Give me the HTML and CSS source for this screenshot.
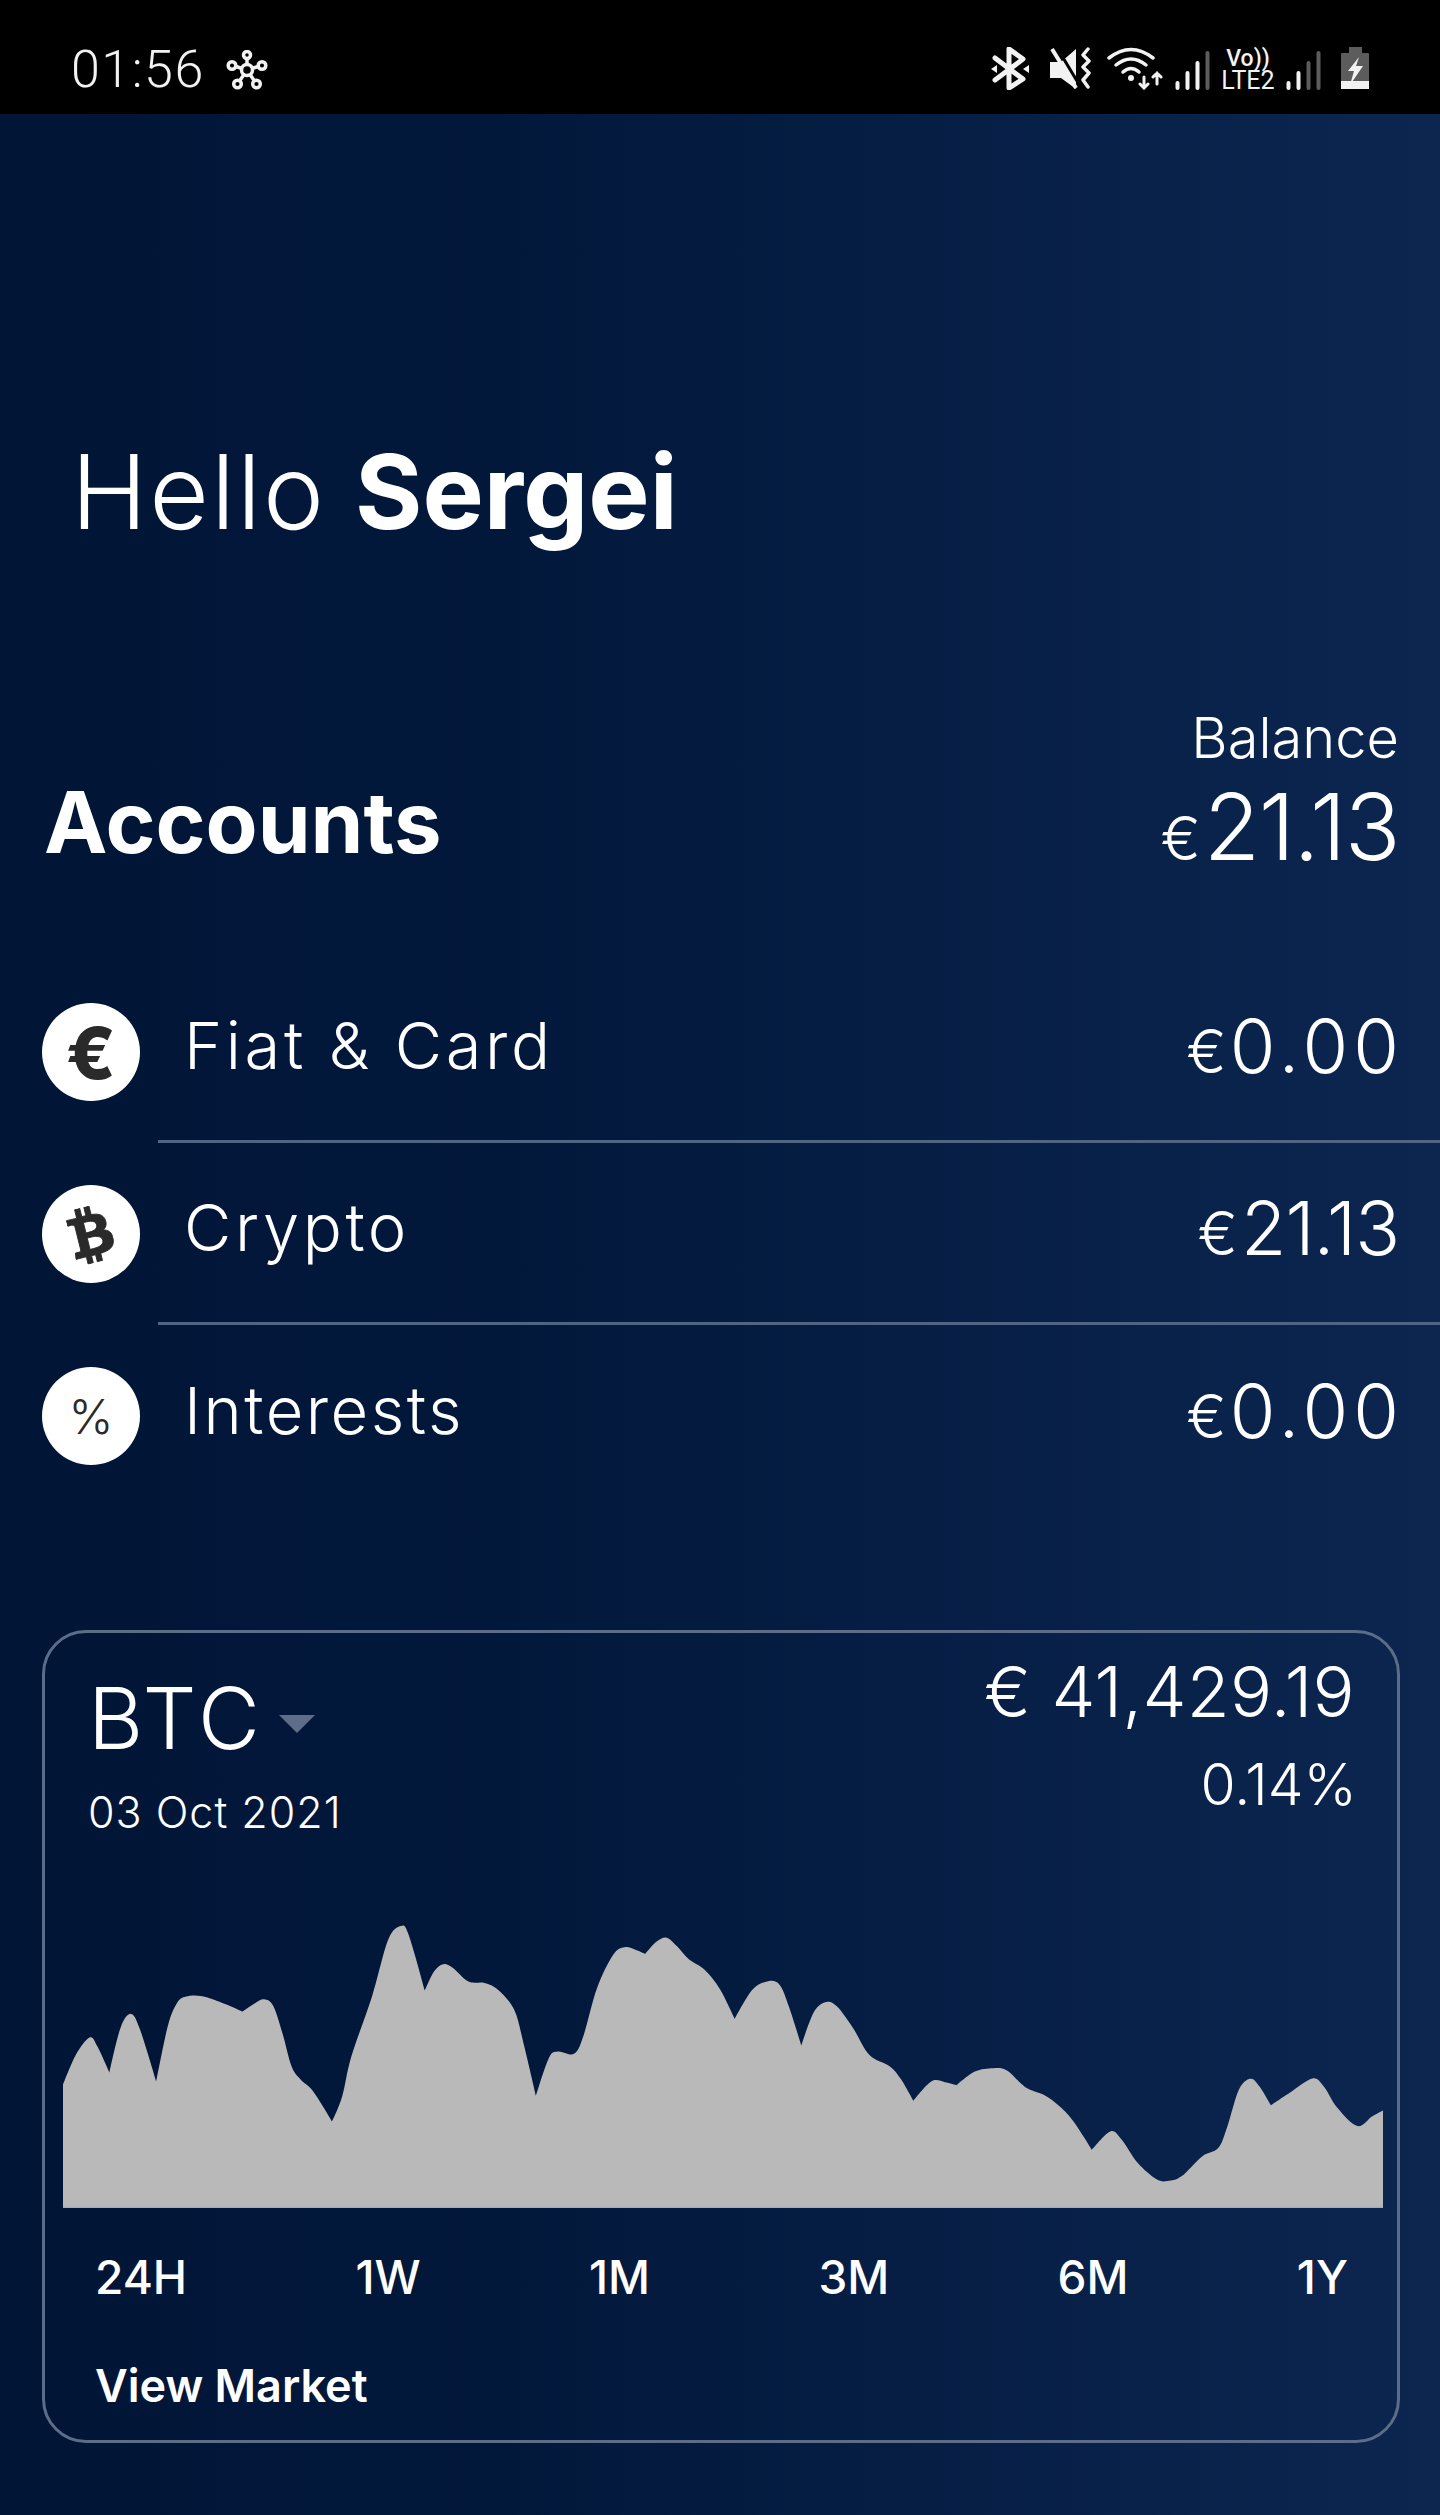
FILE: index.html
```html
<!DOCTYPE html>
<html lang="en">
<head>
  <meta charset="UTF-8" />
  <meta name="viewport" content="width=device-width, initial-scale=1.0"/>
  <title>Accounts</title>
  <link rel="stylesheet" href="styles.css">
</head>
<body>
  <header class="status-bar">
    <div class="status-left">
      <span class="clock">01:56</span>
      <svg class="flower" width="42" height="40" viewBox="0 0 42 40" fill="none" stroke="#f2f2f2" stroke-width="3.500">
        <circle cx="21" cy="20" r="5.500"/>
        <circle cx="21" cy="5" r="3.500"/>
        <circle cx="6" cy="15.500" r="3.800"/>
        <circle cx="36" cy="15.500" r="3.800"/>
        <circle cx="11.500" cy="34" r="3.800"/>
        <circle cx="30.500" cy="34" r="3.800"/>
        <path d="M21 9V14.500M10 16.500L16 18.500M32 16.500L26 18.500M13.500 31L18 24.500M28.500 31L24 24.500"/>
      </svg>
    </div>
    <div class="status-right">
      <svg width="38" height="43" viewBox="0 0 38 43">
        <path d="M4 11L32 32L18 41V2L32 12L4 33" fill="none" stroke="#f2f2f2" stroke-width="5" stroke-linejoin="round" stroke-linecap="round"/>
        <path d="M0 22L6 18V26ZM38 18V26L32 22Z" fill="#f2f2f2"/>
      </svg>
      <svg class="ico-mute" width="42" height="43" viewBox="0 0 42 43">
        <path d="M1 15H12L27 2V42L12 31H1Z" fill="#f2f2f2"/>
        <path d="M7 -1L31 39" stroke="#000" stroke-width="3"/>
        <path d="M3 2L27 41" stroke="#f2f2f2" stroke-width="4"/>
        <path d="M39 2L34 8L40 14L34 20L40 26L34 33L39 40" fill="none" stroke="#f2f2f2" stroke-width="3.500" stroke-linejoin="round" stroke-linecap="round"/>
      </svg>
      <svg class="ico-wifi" width="57" height="43" viewBox="0 0 57 43">
        <g fill="none" stroke="#f2f2f2" stroke-width="3.500" stroke-linecap="round">
          <path d="M2 11Q24 -6 46 11"/>
          <path d="M9 18Q24 6 39 18"/>
          <path d="M16 25Q24 18 32 25"/>
          <path d="M37 30V41M33 37L37 41L41 37M50 37V26M46 30L50 26L54 30" stroke-width="3"/>
        </g>
        <circle cx="24" cy="31" r="3" fill="#f2f2f2"/>
      </svg>
      <svg class="ico-signal" width="36" height="40" viewBox="0 0 36 40">
        <rect x="0.500" y="31" width="4" height="9" rx="2" fill="#f2f2f2"/>
        <rect x="10.500" y="21" width="4" height="19" rx="2" fill="#f2f2f2"/>
        <rect x="20.500" y="11" width="4" height="29" rx="2" fill="#f2f2f2"/>
        <rect x="30.500" y="1" width="4" height="39" rx="2" fill="#5c5c5c"/>
      </svg>
      <div class="volte">
        <span class="vo">Vo))</span>
        <span class="lte">LTE2</span>
      </div>
      <svg class="ico-signal" width="36" height="40" viewBox="0 0 36 40">
        <rect x="0.500" y="31" width="4" height="9" rx="2" fill="#f2f2f2"/>
        <rect x="10.500" y="21" width="4" height="19" rx="2" fill="#f2f2f2"/>
        <rect x="20.500" y="11" width="4" height="29" rx="2" fill="#5c5c5c"/>
        <rect x="30.500" y="1" width="4" height="39" rx="2" fill="#5c5c5c"/>
      </svg>
      <svg class="ico-battery" width="28" height="43" viewBox="0 0 28 43">
        <path d="M8 0H21V6H27Q28 6 28 7V34H0V7Q0 6 1 6H8Z" fill="#5c5c5c"/>
        <path d="M0 34H28V42H0Z" fill="#f2f2f2"/>
        <path d="M18 10L7 24H13L9 38L22 19H15Z" fill="#f2f2f2"/>
      </svg>
    </div>
  </header>

  <main>
    <h1 class="greeting"><span class="hello">Hello</span> <b>Sergei</b></h1>

    <section class="accounts-head">
      <h2>Accounts</h2>
      <div class="balance">
        <div class="balance-label">Balance</div>
        <div class="balance-value"><span class="cur">€</span>21.13</div>
      </div>
    </section>

    <ul class="account-list">
      <li class="account">
        <span class="coin coin-euro">€</span>
        <div class="account-body">
          <span class="account-name">Fiat &amp; Card</span>
          <span class="account-value zero"><span class="cur">€</span>0.00</span>
        </div>
      </li>
      <li class="account">
        <span class="coin">
          <svg width="42" height="57" viewBox="0 0 384 512" class="btc-mark">
            <path fill="#2a2a2a" stroke="#2a2a2a" stroke-width="8" d="M310.204 242.638c27.73-14.18 45.377-39.39 41.28-81.3-5.358-57.351-52.458-76.573-114.85-81.929V0h-48.528v77.203c-12.605 0-25.525.315-38.444.63V0h-48.528v79.409c-17.842.539-38.622.276-97.37 0v51.678c38.314-.678 58.417-3.14 63.023 21.427v217.429c-2.925 19.492-18.524 16.685-53.255 16.071L3.765 443.68c88.481 0 97.37.315 97.37.315V512h48.528v-67.06c13.234.315 26.154.315 38.444.315V512h48.528v-68.005c81.299-4.412 135.647-24.894 142.895-101.467 5.671-61.446-23.32-88.862-69.326-99.89zM150.608 134.553c27.415 0 113.126-8.507 113.126 48.528 0 54.515-85.71 48.212-113.126 48.212v-96.74zm0 251.776V279.821c32.772 0 133.127-9.138 133.127 53.255-.001 60.186-100.355 53.253-133.127 53.253z"/>
          </svg>
        </span>
        <div class="account-body">
          <span class="account-name">Crypto</span>
          <span class="account-value"><span class="cur">€</span>21.13</span>
        </div>
      </li>
      <li class="account">
        <span class="coin coin-pct">%</span>
        <div class="account-body">
          <span class="account-name tight">Interests</span>
          <span class="account-value zero"><span class="cur">€</span>0.00</span>
        </div>
      </li>
    </ul>

    <section class="market-card">
      <div class="market-head">
        <div class="market-title">
          <div class="symbol">BTC<span class="caret"></span></div>
          <div class="market-date">03 Oct 2021</div>
        </div>
        <div class="market-price">
          <div class="price">€ 41,429.19</div>
          <div class="change">0.14%</div>
        </div>
      </div>

      <svg class="chart" width="1320" height="308" viewBox="137 0 2875 925" preserveAspectRatio="none">
        <path id="chart-area" fill="#b9b9b9"/>
        <path d="M137 923H3012" stroke="#9aa8bf" stroke-width="3"/>
      </svg>

      <div class="ranges">
        <span>24H</span>
        <span>1W</span>
        <span>1M</span>
        <span>3M</span>
        <span>6M</span>
        <span>1Y</span>
      </div>
      <div class="view-market">View Market</div>
    </section>
  </main>

  <script src="chart.js"></script>
</body>
</html>
```

FILE: styles.css
```css
* {
  box-sizing: border-box;
}
html, body {
  margin: 0;
  padding: 0;
}
body {
  width: 1440px;
  height: 2515px;
  overflow: hidden;
  font-family: Inter, "Liberation Sans", sans-serif;
  color: #fff;
  background: linear-gradient(90deg, #011536 0%, #02183b 35%, #0c2650 100%);
}

/* status bar */
.status-bar {
  height: 114px;
  background: #000;
  display: flex;
  justify-content: space-between;
  padding: 47px 71px 0 71px;
}
.status-left {
  display: flex;
  align-items: flex-start;
  gap: 21px;
}
.clock {
  font-family: Roboto, sans-serif;
  font-weight: 300;
  font-size: 52px;
  line-height: 46px;
  letter-spacing: 1.500px;
  color: #f2f2f2;
}
.flower {
  margin-top: 3px;
}
.status-right {
  display: flex;
  align-items: flex-start;
}
.ico-mute {
  margin-left: 20px;
}
.ico-wifi {
  margin-left: 16px;
}
.ico-signal {
  margin: 3px 0 0 11px;
}
.volte {
  margin-left: 10px;
  width: 54px;
  display: flex;
  flex-direction: column;
  align-items: center;
  font-family: Roboto, sans-serif;
  font-weight: 500;
  color: #f2f2f2;
}
.vo {
  font-size: 23px;
  line-height: 24px;
}
.lte {
  font-weight: 400;
  font-size: 25px;
  line-height: 20px;
}
.ico-battery {
  margin-left: 19px;
}

/* greeting + totals */
.greeting {
  margin: 318px 0 0;
  padding-left: 71px;
  font-size: 103px;
  line-height: 120px;
  font-weight: 300;
}
.hello {
  letter-spacing: 2px;
}
.greeting b {
  font-weight: 700;
}
.accounts-head {
  margin-top: 156px;
  padding: 0 41px 0 44px;
  display: flex;
  justify-content: space-between;
  align-items: flex-end;
}
.accounts-head h2 {
  margin: 0 0 4px;
  font-size: 85px;
  line-height: 100px;
  font-weight: 700;
}
.balance {
  text-align: right;
}
.balance-label {
  font-size: 56px;
  line-height: 60px;
  font-weight: 300;
}
.balance-value {
  margin-top: 9px;
  height: 100px;
  font-size: 92px;
  line-height: 100px;
  letter-spacing: -1.500px;
  font-weight: 300;
}
.cur {
  font-size: 60px;
  letter-spacing: 0;
  margin-right: 3px;
}

/* account rows */
.account-list {
  list-style: none;
  margin: 84px 0 0;
  padding: 0;
}
.account {
  display: flex;
  align-items: center;
  height: 182px;
  padding-left: 42px;
}
.coin {
  flex: none;
  width: 98px;
  height: 98px;
  border-radius: 50%;
  background: #fff;
  color: #2a2a2a;
  display: flex;
  align-items: center;
  justify-content: center;
}
.coin-euro {
  font-size: 72px;
  font-weight: 800;
}
.coin-pct {
  font-size: 48px;
  font-weight: 300;
}
.btc-mark {
  transform: rotate(-14deg);
}
.account-body {
  flex: 1;
  height: 182px;
  margin-left: 18px;
  padding: 0 41px 10px 26px;
  display: flex;
  align-items: center;
  justify-content: space-between;
  border-bottom: 3px solid #4f6583;
}
.account:last-child .account-body {
  border-bottom: none;
}
.account-name {
  font-size: 65px;
  font-weight: 300;
  line-height: 80px;
  letter-spacing: 3.600px;
}
.account-name.tight {
  letter-spacing: 2.500px;
}
.account-value {
  height: 80px;
  font-size: 74px;
  font-weight: 300;
  line-height: 80px;
  letter-spacing: -1px;
}
.account-value.zero {
  letter-spacing: 5px;
  margin-right: -5px;
}

/* BTC card */
.market-card {
  margin: 123px 40px 0 42px;
  height: 813px;
  border: 3px solid #5b6d88;
  border-radius: 44px;
}
.market-head {
  display: flex;
  justify-content: space-between;
  padding: 19px 42px 0 43px;
}
.market-title {
  margin-top: 17px;
}
.symbol {
  display: flex;
  align-items: center;
  font-size: 85px;
  line-height: 100px;
  font-weight: 300;
  letter-spacing: 4px;
}
.caret {
  margin: 10px 0 0 15px;
  width: 0;
  height: 0;
  border-left: 18px solid transparent;
  border-right: 18px solid transparent;
  border-top: 18px solid #5f6e88;
}
.market-date {
  margin-top: 18px;
  font-size: 43px;
  line-height: 50px;
  font-weight: 300;
  letter-spacing: 1px;
}
.market-price {
  text-align: right;
}
.price {
  font-size: 70px;
  line-height: 80px;
  font-weight: 300;
  letter-spacing: 0.300px;
}
.change {
  margin: 28px -2px 0 0;
  font-size: 57px;
  line-height: 50px;
  font-weight: 300;
}
.chart {
  display: block;
  margin: 63px 0 0 18px;
}
.ranges {
  margin-top: 44px;
  padding: 0 49px 0 50px;
  display: flex;
  justify-content: space-between;
  font-size: 46px;
  line-height: 50px;
  font-weight: 500;
}
.view-market {
  margin-top: 59px;
  padding-left: 50px;
  font-size: 45px;
  line-height: 50px;
  font-weight: 600;
}
```

FILE: chart.js
```js
// outline of the price area, x/y in viewBox units. third value marks a sharp dip
const points = [
  [137,555,1],[165,465],[195,413],[212,440],[238,518,1],[262,385],[285,342],[305,390],[340,545,1],
  [365,380],[385,310],[405,290],[440,289],[490,312],[528,335,1],[555,310],[575,298],[595,318],
  [615,400],[635,500],[655,540],[682,575],[723,665,1],[745,590],[765,470],[810,290],[845,120],
  [873,78],[890,105],[925,272,1],[945,215],[965,193],[985,203],[1020,245],[1055,249],[1085,270],
  [1120,330],[1140,430],[1167,588,1],[1195,475],[1215,455],[1250,462],[1270,410],[1300,265],
  [1335,165],[1360,142],[1385,150],[1405,162,1],[1430,125],[1452,113],[1475,140],[1500,178],
  [1535,210],[1568,268],[1600,357,1],[1638,270],[1673,244],[1698,255],[1718,320],[1745,437,1],
  [1773,335],[1800,306],[1823,320],[1858,385],[1893,465],[1938,500],[1963,540],[1989,603,1],
  [2028,545],[2058,547],[2083,556,1],[2123,515],[2163,505],[2193,512],[2233,562],[2273,585],
  [2308,620],[2338,665],[2378,750,1],[2418,695],[2443,720],[2478,790],[2518,838],[2543,844],
  [2573,830],[2618,770],[2653,745],[2673,680],[2698,570],[2723,537],[2743,560],[2768,617,1],
  [2808,580],[2858,536],[2883,560],[2913,625],[2956,679],[2988,650],[3012,632,1]
];

function tangent(i) {
  const p = points[i];
  if (p[2]) return [0, 0];
  const a = points[i - 1], b = points[i + 1];
  return [(b[0] - a[0]) / 6, (b[1] - a[1]) / 6];
}

let d = `M137 925L${points[0][0]} ${points[0][1]}`;
for (let i = 0; i < points.length - 1; i++) {
  const p = points[i], q = points[i + 1];
  const t1 = tangent(i), t2 = tangent(i + 1);
  d += `C${p[0] + t1[0]} ${p[1] + t1[1]} ${q[0] - t2[0]} ${q[1] - t2[1]} ${q[0]} ${q[1]}`;
}
d += 'L3012 925Z';
document.getElementById('chart-area').setAttribute('d', d);
```
